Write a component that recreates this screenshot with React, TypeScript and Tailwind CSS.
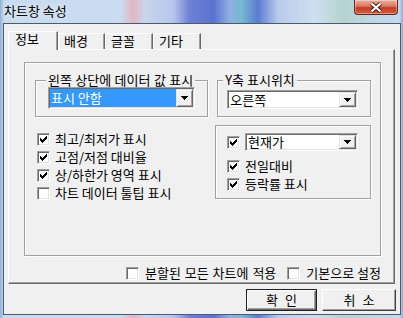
const CHECK =
  "M6 0h1v1h-1z M5 1h2v1h-2z M0 2h1v1h-1z M4 2h3v1h-3z M0 3h2v1h-2z M3 3h3v1h-3z M0 4h5v1h-5z M1 5h3v1h-3z M2 6h1v1h-1z";

const Checkbox = ({ checked = false }: { checked?: boolean }) => (
  <span className="flex h-[13px] w-[13px] shrink-0 items-center justify-center border border-[#a0a0a0] border-r-white border-b-white bg-white shadow-[inset_1px_1px_0_#696969,inset_-1px_-1px_0_#e3e3e3]">
    {checked && (
      <svg width="7" height="7" viewBox="0 0 7 7" shapeRendering="crispEdges">
        <path d={CHECK} fill="#000" />
      </svg>
    )}
  </span>
);

const DropButton = () => (
  <span className="flex w-[17px] shrink-0 items-center justify-center border border-[#e3e3e3] border-r-[#696969] border-b-[#696969] bg-[#f0f0f0] shadow-[inset_1px_1px_0_#fff,inset_-1px_-1px_0_#a0a0a0]">
    <svg width="7" height="4" viewBox="0 0 7 4" shapeRendering="crispEdges">
      <path d="M0 0h7v1h-7z M1 1h5v1h-5z M2 2h3v1h-3z M3 3h1v1h-1z" fill="#000" />
    </svg>
  </span>
);

const Combo = ({
  value,
  selected = false,
  className = "",
}: {
  value: string;
  selected?: boolean;
  className?: string;
}) => (
  <div
    className={`flex border border-[#a0a0a0] border-r-white border-b-white bg-white p-[1px] shadow-[inset_1px_1px_0_#696969,inset_-1px_-1px_0_#e3e3e3] ${className}`}
  >
    <div className="flex flex-1 items-center">
      <span
        className={
          selected
            ? "flex h-full w-full items-center bg-[#3399ff] pl-[1px] text-white"
            : "flex h-full w-full items-center pl-[1px]"
        }
      >
        {value}
      </span>
    </div>
    <DropButton />
  </div>
);

const CheckRow = ({ label, checked }: { label: string; checked?: boolean }) => (
  <div className="flex h-[18px] items-center gap-[5px]">
    <Checkbox checked={checked} />
    <span>{label}</span>
  </div>
);

const Tab = ({ label, active, w }: { label: string; active?: boolean; w: string }) => (
  <div
    className={
      active
        ? `-mb-[1px] h-[19px] border-t border-l border-white border-r border-r-[#696969] bg-[#f0f0f0] pl-[6px] shadow-[inset_-1px_0_0_#a0a0a0] ${w}`
        : `h-[16px] border-t border-l border-white border-r border-r-[#696969] bg-[#f0f0f0] pl-[5px] shadow-[inset_-1px_0_0_#a0a0a0] ${w}`
    }
  >
    {label}
  </div>
);

export default function App() {
  return (
    <div className="h-[318px] w-[403px] overflow-hidden whitespace-nowrap bg-[linear-gradient(90deg,#8fb0d8_0%,#c8dcef_1%,#cadcf0_30%,#e2b6c2_33%,#c9d6ee_36%,#b7c6ec_43%,#6f80d6_47%,#5a72d0_53%,#8fb0e0_57%,#76b9cf_60%,#5a7bd4_64%,#b8cbeb_69%,#cfdff0_78%,#b4d4cf_85%,#c6daef_99%,#8fb0d8_100%)] font-['Noto_Sans_CJK_KR','Noto_Sans',sans-serif] text-[13px] leading-[14px] text-black">
      {/* title bar */}
      <div className="flex h-[23px] items-start">
        <span className="pt-[4px] pl-[4px] [text-shadow:0_0_6px_#fff]">차트창 속성</span>
        <div className="mr-[5px] ml-auto flex h-[15px] w-[44px] items-center justify-center rounded-b-[4px] border border-t-0 border-[#6b2318] bg-[linear-gradient(180deg,#eab0a2_0%,#d97860_45%,#c23d24_55%,#d4603f_100%)] shadow-[inset_0_0_0_1px_rgba(255,255,255,0.35)]">
          <svg width="14" height="11" viewBox="0 0 14 11">
            <path d="M2.5 1.5 L11.5 9.5 M11.5 1.5 L2.5 9.5" stroke="#3b1a14" strokeWidth="4" />
            <path d="M2.5 1.5 L11.5 9.5 M11.5 1.5 L2.5 9.5" stroke="#fff" strokeWidth="2.2" />
          </svg>
        </div>
      </div>

      {/* client area */}
      <div className="ml-[3px] h-[292px] w-[398px] border border-[#4a5a70] bg-[#f0f0f0] pt-[7px] pl-[4px]">
        <div className="relative z-10 flex h-[18px] items-end">
          <Tab label="정보" active w="w-[50px]" />
          <Tab label="배경" w="w-[47px]" />
          <Tab label="글꼴" w="w-[48px]" />
          <Tab label="기타" w="w-[48px]" />
        </div>

        <div className="h-[235px] w-[387px] border border-white border-r-[#696969] border-b-[#696969] pt-[12px] pl-[15px] shadow-[inset_-1px_-1px_0_#a0a0a0]">
          <div className="h-[194px] w-[357px] border border-[#a0a0a0] pt-[10px] pr-[9px] pl-[10px] shadow-[1px_1px_0_#fff,inset_1px_1px_0_#fff]">
            <div className="flex gap-[9px]">
              <fieldset className="h-[44px] w-[171px] border border-[#a0a0a0] px-[12px] shadow-[1px_1px_0_#fff,inset_1px_1px_0_#fff]">
                <legend className="-ml-[2px] bg-[#f0f0f0] px-[2px] [word-spacing:0.5px]">왼쪽 상단에 데이터 값 표시</legend>
                <Combo value="표시 안함" selected className="h-[22px]" />
              </fieldset>
              <fieldset className="h-[44px] w-[156px] border border-[#a0a0a0] pr-[12px] pl-[9px] shadow-[1px_1px_0_#fff,inset_1px_1px_0_#fff]">
                <legend className="-ml-[4px] bg-[#f0f0f0] px-[2px]">Y축 표시위치</legend>
                <Combo value="오른쪽" className="mt-[3px] h-[19px]" />
              </fieldset>
            </div>

            <div className="mt-[8px] flex items-start">
              <div className="flex flex-1 flex-col pt-[5px] pl-[2px]">
                <CheckRow label="최고/최저가 표시" checked />
                <CheckRow label="고점/저점 대비율" checked />
                <CheckRow label="상/하한가 영역 표시" checked />
                <CheckRow label="차트 데이터 툴팁 표시" />
              </div>
              <div className="w-[156px] border border-[#a0a0a0] pt-[7px] pb-[5px] pl-[11px] shadow-[1px_1px_0_#fff,inset_1px_1px_0_#fff]">
                <div className="flex h-[18px] items-center gap-[5px]">
                  <Checkbox checked />
                  <Combo value="현재가" className="h-[18px] w-[113px]" />
                </div>
                <div className="mt-[6px]">
                  <CheckRow label="전일대비" checked />
                  <CheckRow label="등락률 표시" checked />
                </div>
              </div>
            </div>
          </div>

          <div className="mt-[9px] flex h-[16px] w-[357px] items-center justify-end">
            <Checkbox />
            <span className="ml-[6px] [word-spacing:1px]">분할된 모든 차트에 적용</span>
            <span className="ml-[11px]">
              <Checkbox />
            </span>
            <span className="ml-[6px]">기본으로 설정</span>
          </div>
        </div>

        <div className="mt-[5px] ml-[238px] flex gap-[5px]">
          <button className="flex h-[22px] w-[71px] items-center justify-center border border-[#202020] bg-[#f0f0f0] [word-spacing:4px] shadow-[inset_1px_1px_0_#fff,inset_-1px_-1px_0_#696969,inset_-2px_-2px_0_#a0a0a0]">
            확 인
          </button>
          <button className="flex h-[22px] w-[74px] items-center justify-center border border-white border-r-[#404040] border-b-[#404040] bg-[#f0f0f0] [word-spacing:4px] shadow-[inset_-1px_-1px_0_#a0a0a0]">
            취 소
          </button>
        </div>
      </div>
    </div>
  );
}
